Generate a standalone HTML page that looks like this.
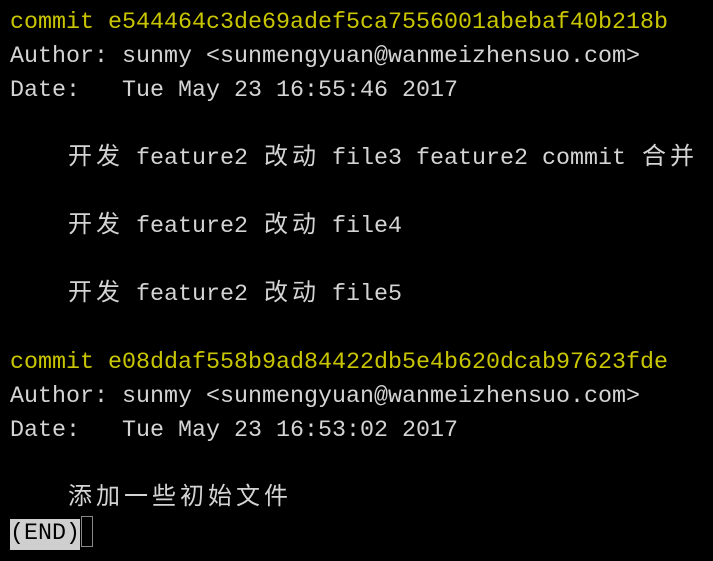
<!DOCTYPE html>
<html><head><meta charset="utf-8"><style>
html,body{margin:0;padding:0;background:#000;width:713px;height:561px;overflow:hidden}
pre{margin:0;padding:6px 0 0 10px;font-family:"Liberation Mono","Noto Sans CJK SC",monospace;font-size:23.33px;line-height:34px;color:#d4d4d4;}
.y{color:#c9c600}
.c{display:inline-block;width:28px;text-align:center;font-size:24px}
.end{background:#cfcfcf;color:#000;display:inline-block;line-height:31px}
.cur{display:inline-block;width:10px;height:29px;border:1px solid #888;vertical-align:-8px;margin-left:1px}
</style></head><body><pre><span class="y">commit e544464c3de69adef5ca7556001abebaf40b218b</span>
Author: sunmy &lt;sunmengyuan@wanmeizhensuo.com&gt;
Date:   Tue May 23 16:55:46 2017

    <span class="c">开</span><span class="c">发</span> feature2 <span class="c">改</span><span class="c">动</span> file3 feature2 commit <span class="c">合</span><span class="c">并</span>

    <span class="c">开</span><span class="c">发</span> feature2 <span class="c">改</span><span class="c">动</span> file4

    <span class="c">开</span><span class="c">发</span> feature2 <span class="c">改</span><span class="c">动</span> file5

<span class="y">commit e08ddaf558b9ad84422db5e4b620dcab97623fde</span>
Author: sunmy &lt;sunmengyuan@wanmeizhensuo.com&gt;
Date:   Tue May 23 16:53:02 2017

    <span class="c">添</span><span class="c">加</span><span class="c">一</span><span class="c">些</span><span class="c">初</span><span class="c">始</span><span class="c">文</span><span class="c">件</span>
<span class="end">(END)</span><span class="cur"></span></pre></body></html>
